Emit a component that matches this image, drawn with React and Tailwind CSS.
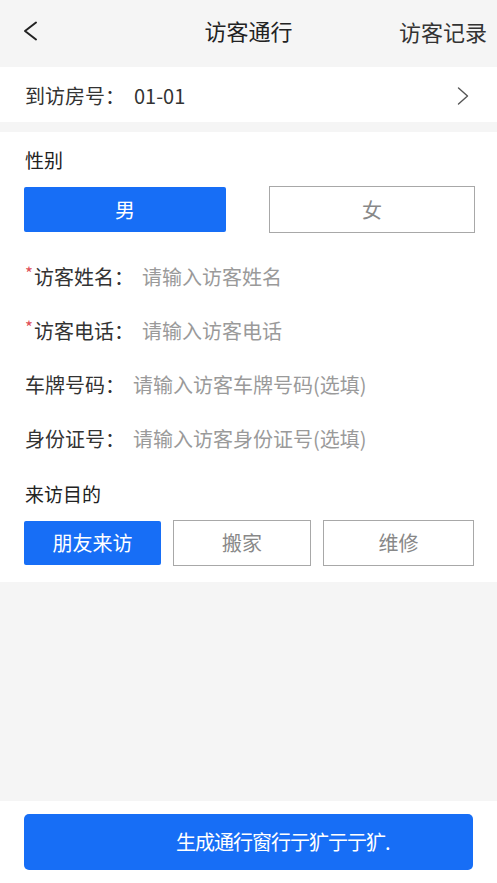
import React, { useState } from "react";

const font = { fontFamily: '"Noto Sans CJK SC", "Noto Sans", sans-serif' };

const ChevronLeft = () => (
  <svg width="16" height="20" viewBox="0 0 16 20" fill="none">
    <path d="M14 1.5L3 10l11 8.5" stroke="#222" strokeWidth="2" strokeLinecap="round" strokeLinejoin="round" />
  </svg>
);

const ChevronRight = () => (
  <svg width="12" height="18" viewBox="0 0 12 18" fill="none">
    <path d="M1.5 1l9 8-9 8" stroke="#555" strokeWidth="1.4" strokeLinecap="round" strokeLinejoin="round" />
  </svg>
);

const FieldRow = ({ label, placeholder, required }) => (
  <div className="flex items-center h-[54px] px-[25px] text-[20px]">
    {required && <span className="text-[#e0505a] text-[17px] leading-none -mt-[10px] w-[9px]">*</span>}
    <span className="text-[#333]">{label}：</span>
    <span className="ml-[8px] text-[#9a9a9a]">{placeholder}</span>
  </div>
);

const App = () => {
  const [gender, setGender] = useState("男");
  const [purpose, setPurpose] = useState("朋友来访");

  return (
    <div className="h-[883px] flex flex-col bg-[#f5f5f5]" style={font}>
      <header className="h-[67px] flex items-center justify-between pl-[22px] pr-[10px] pb-[6px] relative">
        <ChevronLeft />
        <h1 className="absolute left-1/2 -translate-x-1/2 top-[16px] text-[22px] text-[#222] leading-[28px]">访客通行</h1>
        <span className="text-[22px] text-[#333] leading-[28px]">访客记录</span>
      </header>

      <div className="h-[55px] bg-white flex items-center justify-between pl-[25px] pr-[28px] pt-[3px] text-[20px] text-[#333]">
        <span>到访房号：&nbsp;&nbsp;01-01</span>
        <ChevronRight />
      </div>

      <section className="mt-[10px] bg-white pt-[16px] pb-[16px]">
        <div className="px-[25px] text-[19px] text-[#222] leading-[24px]">性别</div>
        <div className="flex justify-between pl-[24px] pr-[22px] mt-[15px]">
          {["男", "女"].map((g) =>
            gender === g ? (
              <button key={g} onClick={() => setGender(g)} className="w-[202px] h-[45px] bg-[#176ef6] text-white text-[20px] rounded-[2px]">
                {g}
              </button>
            ) : (
              <button key={g} onClick={() => setGender(g)} className="w-[206px] h-[47px] -mt-[1px] border-[1.5px] border-[#a8a8a8] text-[#888] text-[20px] bg-white">
                {g}
              </button>
            )
          )}
        </div>

        <div className="mt-[17px]">
          <FieldRow required label="访客姓名" placeholder="请输入访客姓名" />
          <FieldRow required label="访客电话" placeholder="请输入访客电话" />
          <FieldRow label="车牌号码" placeholder="请输入访客车牌号码(选填)" />
          <FieldRow label="身份证号" placeholder="请输入访客身份证号(选填)" />
        </div>

        <div className="px-[25px] mt-[16px] text-[19px] text-[#222] leading-[24px]">来访目的</div>
        <div className="flex gap-[12px] pl-[24px] pr-[22px] mt-[15px]">
          {[
            ["朋友来访", "w-[137px]"],
            ["搬家", "w-[138px]"],
            ["维修", "w-[151px]"],
          ].map(([p, w]) =>
            purpose === p ? (
              <button key={p} onClick={() => setPurpose(p)} className={`${w} shrink-0 h-[44px] bg-[#176ef6] text-white text-[20px] rounded-[2px]`}>
                {p}
              </button>
            ) : (
              <button key={p} onClick={() => setPurpose(p)} className={`${w} shrink-0 h-[46px] -mt-[1px] border-[1.5px] border-[#a8a8a8] text-[#888] text-[20px] bg-white`}>
                {p}
              </button>
            )
          )}
        </div>
      </section>

      <div className="flex-1" />

      <footer className="h-[82px] bg-white px-[24px] pt-[13px]">
        <button className="w-full h-[56px] bg-[#176ef6] rounded-[5px] text-white text-[20px] text-left pl-[152px] tracking-[-1px]">
          生成通行窗行亍犷亍亍犷.
        </button>
      </footer>
    </div>
  );
};

export default App;
